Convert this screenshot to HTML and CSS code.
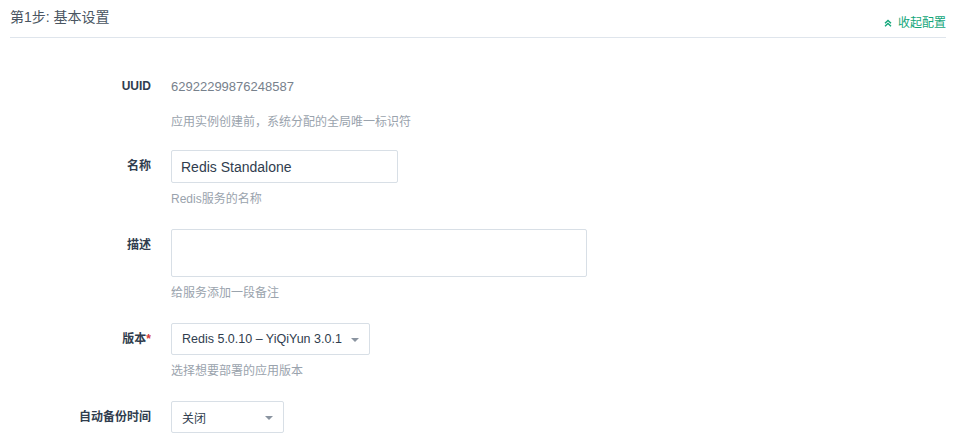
FILE: index.html
```html
<!DOCTYPE html>
<html lang="zh-CN">
<head>
<meta charset="utf-8">
<title>第1步: 基本设置</title>
<link rel="stylesheet" href="styles.css">
</head>
<body>
<div class="page">
  <div class="section-head">
    <div class="section-title">第1步: 基本设置</div>
    <a class="collapse-link" href="#">
      <svg class="collapse-icon" width="8" height="8" viewBox="0 0 8 8"><path d="M1 4.2 L4 1.5 L7 4.2 M1 7.2 L4 4.5 L7 7.2" fill="none" stroke="currentColor" stroke-width="1.4"/></svg>
      <span>收起配置</span>
    </a>
  </div>
  <form class="form">
    <div class="row row-static">
      <div class="label">UUID</div>
      <div class="field">
        <div class="static-value">62922299876248587</div>
        <div class="help">应用实例创建前，系统分配的全局唯一标识符</div>
      </div>
    </div>
    <div class="row">
      <div class="label">名称</div>
      <div class="field">
        <input class="input input-name" type="text" value="Redis Standalone">
        <div class="help">Redis服务的名称</div>
      </div>
    </div>
    <div class="row">
      <div class="label">描述</div>
      <div class="field">
        <textarea class="textarea"></textarea>
        <div class="help">给服务添加一段备注</div>
      </div>
    </div>
    <div class="row">
      <div class="label">版本<span class="required">*</span></div>
      <div class="field">
        <div class="select select-version"><span>Redis 5.0.10 – YiQiYun 3.0.1</span><i class="caret"></i></div>
        <div class="help">选择想要部署的应用版本</div>
      </div>
    </div>
    <div class="row">
      <div class="label">自动备份时间</div>
      <div class="field">
        <div class="select select-backup"><span>关闭</span><i class="caret"></i></div>
      </div>
    </div>
  </form>
</div>
</body>
</html>
```

FILE: styles.css
```css
* { box-sizing: border-box; }
html, body { margin: 0; padding: 0; background: #fff; }
body {
  font-family: "Liberation Sans", "Noto Sans CJK SC", Arial, sans-serif;
  color: #303d4e;
  overflow: hidden;
}
.page { padding: 0 7px 0 10px; }
.section-head {
  display: flex;
  justify-content: space-between;
  align-items: flex-start;
  border-bottom: 1px solid #dfe5ec;
  height: 38px;
  padding-top: 7px;
}
.section-title {
  font-size: 14px;
  line-height: 20px;
  color: #4a5561;
}
.collapse-link {
  display: flex;
  align-items: center;
  gap: 6px;
  margin-top: 8px;
  color: #12a679;
  font-size: 12px;
  line-height: 16px;
  text-decoration: none;
}
.collapse-icon { display: block; }
.form { padding-top: 32px; }
.row {
  display: flex;
  gap: 20px;
  margin-bottom: 22px;
}
.row-static { margin-bottom: 20px; }
.label {
  width: 141px;
  flex: none;
  text-align: right;
  font-size: 12px;
  font-weight: bold;
  line-height: 32px;
  color: #303d4e;
}
.required { color: #d23a3a; }
.field { display: flex; flex-direction: column; align-items: flex-start; }
.static-value {
  font-size: 13px;
  line-height: 38px;
  height: 38px;
  margin-top: -2px;
  color: #77818c;
}
.help {
  margin-top: 8px;
  font-size: 12px;
  line-height: 16px;
  color: #9aa3ad;
}
.input, .textarea, .select {
  border: 1px solid #d8dfe6;
  border-radius: 2px;
  background: #fff;
  font-family: inherit;
  color: #303d4e;
}
.input {
  height: 33px;
  padding: 0 9px;
  font-size: 14px;
  outline: none;
}
.input-name { width: 227px; }
.textarea {
  width: 416px;
  height: 48px;
  resize: none;
  display: block;
}
.select {
  height: 32px;
  display: flex;
  align-items: center;
  justify-content: space-between;
  padding: 0 10px 0 10px;
  font-size: 12.5px;
}
.select-version { width: 199px; }
.select-backup { width: 113px; font-size: 12px; }
.caret {
  width: 0;
  height: 0;
  border-left: 4.5px solid transparent;
  border-right: 4.5px solid transparent;
  border-top: 4.5px solid #8a94a0;
  margin-top: 1px;
}
```
